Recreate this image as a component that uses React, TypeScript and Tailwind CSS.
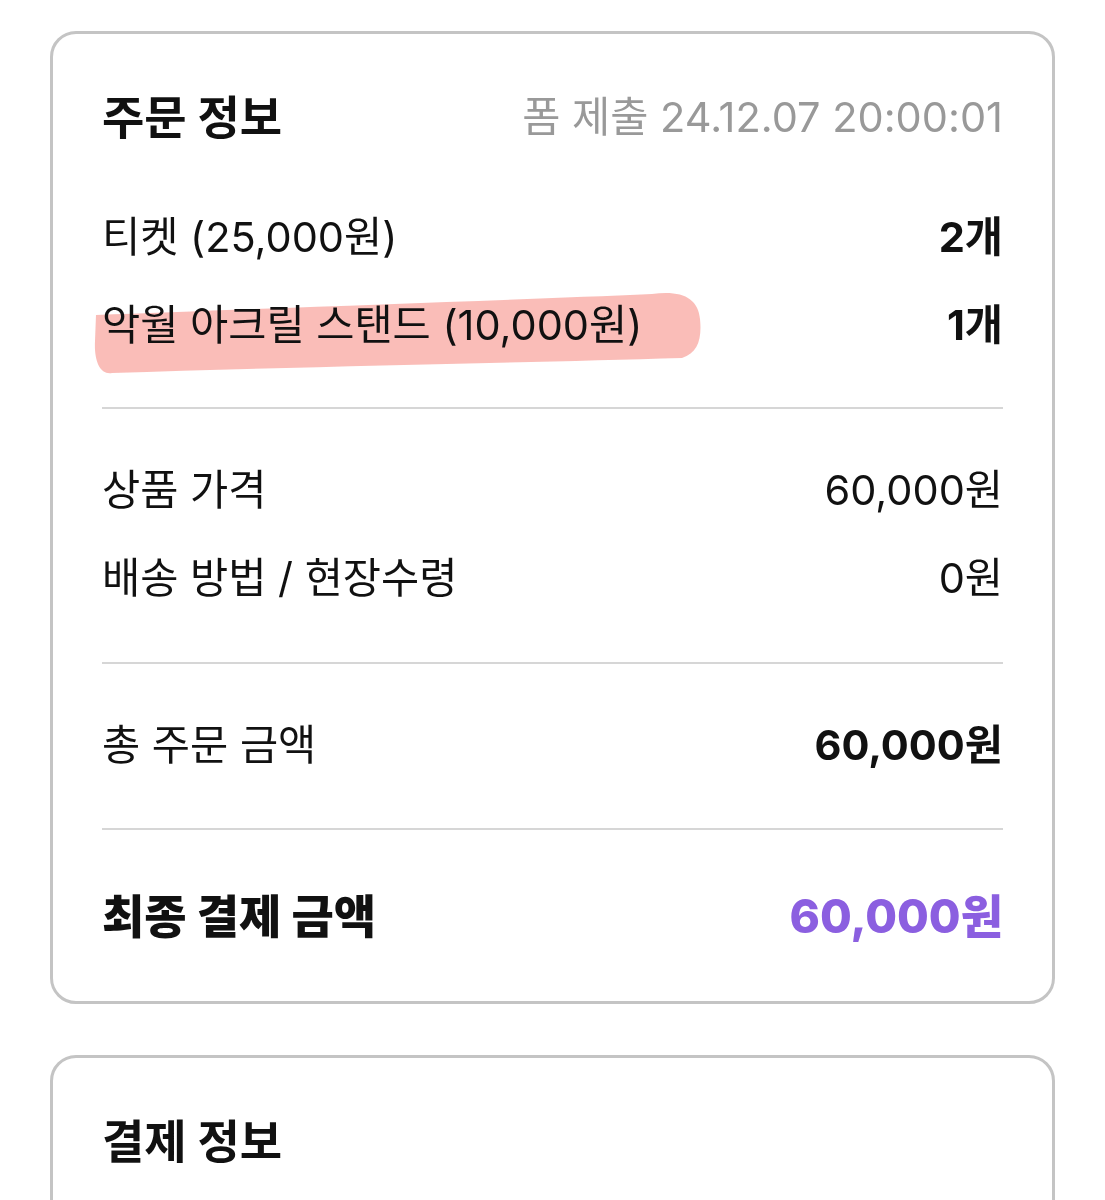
const font = { fontFamily: "Inter, 'Noto Sans CJK KR', sans-serif" };

function Row({ label, value, bold = false }: { label: string; value: string; bold?: boolean }) {
  return (
    <div className="flex h-[88px] items-center justify-between">
      <span className="text-[41.5px] text-[#111]">{label}</span>
      <span className={`text-[41.5px] text-[#111] ${bold ? "font-bold" : ""}`}>{value}</span>
    </div>
  );
}

function Divider() {
  return <div className="h-[2px] bg-[#d6d6d6]" />;
}

export default function App() {
  return (
    <main className="min-h-[1200px] bg-white px-[50px] pt-[31px]" style={font}>
      <section className="rounded-[26px] border-[3px] border-[#c4c4c4] px-[49px] pt-[53px] pb-[41px]">
        <div className="flex h-[60px] items-center justify-between">
          <h1 className="text-[46px] font-bold text-[#111]">주문 정보</h1>
          <span className="text-[41.5px] text-[#999]">폼 제출 24.12.07 20:00:01</span>
        </div>

        <div className="mt-[46px]">
          <Row label="티켓 (25,000원)" value="2개" bold />
          <div className="relative flex h-[88px] items-center justify-between">
            <svg
              className="pointer-events-none absolute left-[-10px] top-[8px] mix-blend-multiply"
              width="612"
              height="86"
              viewBox="0 0 612 86"
            >
              <path
                d="M4 26 C 150 20, 400 12, 560 5 C 590 1, 606 9, 608 30 C 610 50, 606 64, 590 69 C 420 74, 200 78, 20 84 C 8 86, 2 72, 3 52 Z"
                fill="#f9b1ab"
                opacity="0.85"
              />
            </svg>
            <span className="relative text-[41.5px] text-[#111]">악월 아크릴 스탠드 (10,000원)</span>
            <span className="text-[41.5px] font-bold text-[#111]">1개</span>
          </div>
        </div>

        <div className="mt-[38px]">
          <Divider />
        </div>

        <div className="mt-[37px]">
          <Row label="상품 가격" value="60,000원" />
          <Row label="배송 방법 / 현장수령" value="0원" />
        </div>

        <div className="mt-[40px]">
          <Divider />
        </div>

        <div className="mt-[37px]">
          <Row label="총 주문 금액" value="60,000원" bold />
        </div>

        <div className="mt-[39px]">
          <Divider />
        </div>

        <div className="mt-[42px] flex h-[88px] items-center justify-between">
          <span className="text-[46px] font-extrabold text-[#111]">최종 결제 금액</span>
          <span className="text-[46px] font-extrabold text-[#8b5fe0]">60,000원</span>
        </div>
      </section>

      <section className="mt-[51px] h-[300px] rounded-[26px] border-[3px] border-[#c4c4c4] px-[49px] pt-[53px]">
        <div className="flex h-[60px] items-center">
          <h2 className="text-[46px] font-bold text-[#111]">결제 정보</h2>
        </div>
      </section>
    </main>
  );
}
